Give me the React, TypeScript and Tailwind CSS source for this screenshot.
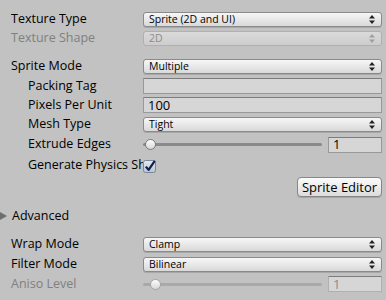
import React from "react";

const Arrows = ({ disabled }: { disabled?: boolean }) => (
  <svg width="6" height="9" viewBox="0 0 6 9" className="shrink-0">
    <path d="M3 0L6 3.5H0Z M3 9L0 5.5H6Z" fill={disabled ? "#a0a0a0" : "#222"} />
  </svg>
);

function Dropdown({ value, disabled }: { value: string; disabled?: boolean }) {
  return (
    <div
      className={
        "flex items-center justify-between h-[15px] rounded-[3px] border pl-[5px] pr-[6px] text-[10.5px] leading-none " +
        (disabled
          ? "border-[#b0b0b0] bg-gradient-to-b from-[#dadada] to-[#cdcdcd] text-[#8c8c8c]"
          : "border-[#8a8a8a] bg-gradient-to-b from-[#f7f7f7] to-[#d9d9d9] text-[#000] shadow-[0_1px_0_#a8a8a8]")
      }
    >
      <span>{value}</span>
      <Arrows disabled={disabled} />
    </div>
  );
}

function Field({ value, className = "" }: { value?: string; className?: string }) {
  return (
    <div
      className={
        "flex items-center h-[16px] border border-[#999] border-t-[#7d7d7d] bg-[#d6d6d6] pl-[4px] text-[13px] leading-none text-[#000] " +
        className
      }
    >
      {value}
    </div>
  );
}

function Slider({ pos, disabled }: { pos: number; disabled?: boolean }) {
  return (
    <div className="flex items-center gap-[6px]">
      <div className="relative flex-1 h-[16px] flex items-center">
        <div className={"w-full h-[3px] rounded-full " + (disabled ? "bg-[#a9a9a9]" : "bg-[#8a8a8a]")} />
        <div
          className={
            "absolute top-[2.5px] w-[11px] h-[11px] rounded-full border bg-gradient-to-b from-[#fdfdfd] to-[#d8d8d8] " +
            (disabled ? "border-[#a5a5a5]" : "border-[#7a7a7a]")
          }
          style={{ left: pos }}
        />
      </div>
      <Field
        value="1"
        className={"w-[54px] " + (disabled ? "text-[#8c8c8c] border-[#b0b0b0] bg-[#cdcdcd]" : "")}
      />
    </div>
  );
}

function Row({
  label,
  indent,
  disabled,
  h,
  children,
}: {
  label: string;
  indent?: boolean;
  disabled?: boolean;
  h: string;
  children?: React.ReactNode;
}) {
  return (
    <div className={"flex items-center " + h}>
      <div
        className={
          "w-[143px] shrink-0 overflow-hidden whitespace-nowrap text-[12.5px] " +
          (indent ? "pl-[28px] " : "pl-[11px] ") +
          (disabled ? "text-[#808080]" : "text-[#000]")
        }
      >
        {label}
      </div>
      <div className="flex-1 pr-[4px]">{children}</div>
    </div>
  );
}

export default function App() {
  return (
    <div className="w-[386px] h-[300px] overflow-hidden bg-[#c2c2c2] pt-[9px] font-['Open_Sans',sans-serif]">
      <Row label="Texture Type" h="h-[20px]">
        <Dropdown value="Sprite (2D and UI)" />
      </Row>
      <Row label="Texture Shape" disabled h="h-[19px]">
        <Dropdown value="2D" disabled />
      </Row>
      <div className="h-[9px]" />
      <Row label="Sprite Mode" h="h-[19px]">
        <Dropdown value="Multiple" />
      </Row>
      <Row label="Packing Tag" indent h="h-[20px]">
        <Field />
      </Row>
      <Row label="Pixels Per Unit" indent h="h-[18px]">
        <Field value="100" />
      </Row>
      <Row label="Mesh Type" indent h="h-[20px]">
        <Dropdown value="Tight" />
      </Row>
      <Row label="Extrude Edges" indent h="h-[21px]">
        <Slider pos={2} />
      </Row>
      <Row label="Generate Physics Shape" indent h="h-[21px]">
        <svg width="15" height="14" viewBox="0 0 15 14">
          <defs>
            <linearGradient id="cb" x1="0" y1="0" x2="0" y2="1">
              <stop offset="0" stopColor="#e6eaf0" />
              <stop offset="1" stopColor="#b9c3d1" />
            </linearGradient>
          </defs>
          <rect x="0.5" y="1.5" width="12" height="12" rx="2" fill="url(#cb)" stroke="#7a8699" />
          <path d="M2.8 7.6L5.6 10.8L11.8 1.8" fill="none" stroke="#0d1f4a" strokeWidth="2.2" strokeLinejoin="round" />
        </svg>
      </Row>
      <div className="flex justify-end pr-[4px] pt-[1px]">
        <button className="h-[20px] w-[85px] rounded-[4px] border border-[#878787] bg-gradient-to-b from-[#fbfbfb] to-[#dcdcdc] text-[13px] leading-none text-[#000] shadow-[0_1px_0_#a5a5a5]">
          Sprite Editor
        </button>
      </div>
      <div className="flex items-center h-[20px] mt-[9px]">
        <svg width="12" height="10" viewBox="0 0 12 10" className="shrink-0">
          <path d="M0 1L7 5L0 9Z" fill="#6e6e6e" />
        </svg>
        <span className="text-[12.5px] text-[#000]">Advanced</span>
      </div>
      <div className="h-[8px]" />
      <Row label="Wrap Mode" h="h-[20px]">
        <Dropdown value="Clamp" />
      </Row>
      <Row label="Filter Mode" h="h-[20px]">
        <Dropdown value="Bilinear" />
      </Row>
      <Row label="Aniso Level" disabled h="h-[20px]">
        <Slider pos={7} disabled />
      </Row>
    </div>
  );
}
